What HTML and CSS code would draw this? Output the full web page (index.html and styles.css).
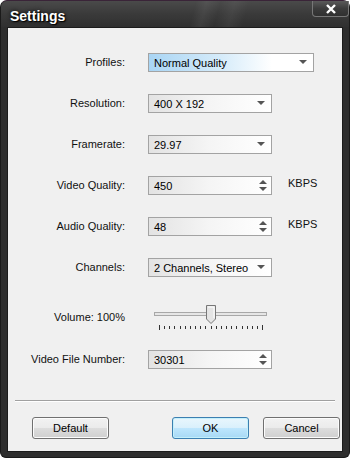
FILE: index.html
```html
<!DOCTYPE html>
<html lang="en">
<head>
    <meta charset="UTF-8">
    <title>Settings</title>
    <link rel="stylesheet" href="styles.css">
</head>
<body>
    <div class="window">
        <div class="titlebar">
            <div class="title">Settings</div>
            <div class="close">
                <svg width="12" height="10" viewBox="0 0 12 10"><path d="M2 1 L10 9 M10 1 L2 9" stroke="#fff" stroke-width="2.4"/></svg>
            </div>
        </div>
        <div class="client">
            <div class="form">
                <div class="row">
                    <label>Profiles:</label>
                    <div class="combo combo-wide selected"><span>Normal Quality</span><i class="arrow"></i></div>
                </div>
                <div class="row">
                    <label>Resolution:</label>
                    <div class="combo"><span>400 X 192</span><i class="arrow"></i></div>
                </div>
                <div class="row">
                    <label>Framerate:</label>
                    <div class="combo"><span>29.97</span><i class="arrow"></i></div>
                </div>
                <div class="row">
                    <label>Video Quality:</label>
                    <div class="combo spin"><span>450</span><i class="spinner"><b class="up"></b><b class="down"></b></i></div>
                    <div class="unit">KBPS</div>
                </div>
                <div class="row">
                    <label>Audio Quality:</label>
                    <div class="combo spin"><span>48</span><i class="spinner"><b class="up"></b><b class="down"></b></i></div>
                    <div class="unit">KBPS</div>
                </div>
                <div class="row">
                    <label>Channels:</label>
                    <div class="combo"><span>2 Channels, Stereo</span><i class="arrow"></i></div>
                </div>
                <div class="row row-volume">
                    <label>Volume: 100%</label>
                    <svg class="slider" width="116" height="34" viewBox="0 0 116 34">
                        <rect x="0.5" y="14.5" width="112" height="3" fill="#e6e6e6" stroke="#a8a8a8"/>
                        <g stroke="#333" stroke-width="1">
                            <line x1="5.5" y1="27" x2="5.5" y2="32"/>
                            <line x1="10.5" y1="28" x2="10.5" y2="31"/>
                            <line x1="15.5" y1="28" x2="15.5" y2="31"/>
                            <line x1="20.5" y1="28" x2="20.5" y2="31"/>
                            <line x1="26.5" y1="28" x2="26.5" y2="31"/>
                            <line x1="31.5" y1="28" x2="31.5" y2="31"/>
                            <line x1="36.5" y1="28" x2="36.5" y2="31"/>
                            <line x1="41.5" y1="28" x2="41.5" y2="31"/>
                            <line x1="46.5" y1="28" x2="46.5" y2="31"/>
                            <line x1="51.5" y1="28" x2="51.5" y2="31"/>
                            <line x1="57.5" y1="28" x2="57.5" y2="31"/>
                            <line x1="62.5" y1="28" x2="62.5" y2="31"/>
                            <line x1="67.5" y1="28" x2="67.5" y2="31"/>
                            <line x1="72.5" y1="28" x2="72.5" y2="31"/>
                            <line x1="77.5" y1="28" x2="77.5" y2="31"/>
                            <line x1="82.5" y1="28" x2="82.5" y2="31"/>
                            <line x1="88.5" y1="28" x2="88.5" y2="31"/>
                            <line x1="93.5" y1="28" x2="93.5" y2="31"/>
                            <line x1="98.5" y1="28" x2="98.5" y2="31"/>
                            <line x1="103.5" y1="28" x2="103.5" y2="31"/>
                            <line x1="108.5" y1="27" x2="108.5" y2="32"/>
                        </g>
                        <path d="M52.5 7.5 H61.5 V21 L57 25.5 L52.5 21 Z" fill="#e4e4e4" stroke="#777"/>
                        <path d="M54 9 H60 V20" fill="none" stroke="#fff"/>
                    </svg>
                </div>
                <div class="row">
                    <label>Video File Number:</label>
                    <div class="combo spin"><span>30301</span><i class="spinner"><b class="up"></b><b class="down"></b></i></div>
                </div>
            </div>
            <div class="separator"></div>
            <div class="buttons">
                <button class="btn">Default</button>
                <div class="right-buttons">
                    <button class="btn btn-default">OK</button>
                    <button class="btn">Cancel</button>
                </div>
            </div>
        </div>
    </div>
</body>
</html>
```
FILE: styles.css
```css
body {
    margin: 0;
    padding: 0;
    background: #fff;
    font-family: "Liberation Sans", Arial, sans-serif;
    font-size: 11px;
    color: #000;
}
.window {
    width: 350px;
    height: 458px;
    box-sizing: border-box;
    background: #2e2e2e;
    border: 1px solid #1a1a1a;
    border-top-color: #3a2438;
    border-radius: 7px 7px 6px 6px;
    padding: 0 6px 5px 6px;
    display: flex;
    flex-direction: column;
}
.titlebar {
    height: 26px;
    display: flex;
    justify-content: space-between;
    margin: 0 -6px;
    padding: 0 6px;
    background:
        linear-gradient(105deg, transparent 55%, rgba(255,255,255,0.06) 58%, transparent 62%, rgba(255,255,255,0.05) 66%, transparent 70%),
        linear-gradient(#4a4a4a, #3a3a3a 50%, #303030);
    border-radius: 6px 6px 0 0;
}
.title {
    color: #fff;
    font-weight: bold;
    font-size: 14px;
    padding: 7px 0 0 3px;
    text-shadow: 0 0 4px #000, 1px 1px 1px #000;
}
.close {
    width: 37px;
    height: 16px;
    margin-right: -6px;
    box-sizing: border-box;
    border: 1px solid #777;
    border-top: none;
    border-radius: 0 0 4px 4px;
    background: linear-gradient(#5a5a5a, #3c3c3c 50%, #303030);
    display: flex;
    align-items: center;
    justify-content: center;
}
.client {
    flex: 1;
    background: #f0f0f0;
    border: 1px solid #1c1c1c;
    display: flex;
    flex-direction: column;
}
.form {
    padding-top: 24px;
}
.row {
    height: 20px;
    margin-bottom: 21px;
    display: flex;
    align-items: center;
}
.row label {
    width: 117px;
    text-align: right;
    margin-right: 23px;
    color: #111;
}
.combo {
    width: 124px;
    height: 19px;
    box-sizing: border-box;
    border: 1px solid #a3a3a3;
    background: linear-gradient(to right, #e3e3e3, #f5f5f5 50%, #ffffff);
    display: flex;
    align-items: center;
    justify-content: space-between;
    padding: 0 5px 0 5px;
}
.combo span {
    padding-top: 1px;
}
.combo-wide {
    width: 166px;
}
.selected {
    background: linear-gradient(to right, #a9d5f4, #d7ecfa 45%, #ffffff 75%);
}
.arrow {
    width: 0;
    height: 0;
    border-left: 4px solid transparent;
    border-right: 4px solid transparent;
    border-top: 4px solid #555;
    margin-right: 1px;
}
.spin {
    padding-right: 4px;
}
.spinner {
    display: flex;
    flex-direction: column;
    gap: 3px;
}
.spinner b {
    width: 0;
    height: 0;
    border-left: 4px solid transparent;
    border-right: 4px solid transparent;
}
.spinner .up {
    border-bottom: 4px solid #555;
}
.spinner .down {
    border-top: 4px solid #555;
}
.unit {
    margin-left: 16px;
    margin-top: -4px;
    color: #111;
}
.row-volume {
    height: 34px;
    margin-bottom: 17px;
    align-items: flex-start;
}
.row-volume label {
    padding-top: 13px;
}
.slider {
    margin-left: 6px;
}
.separator {
    margin: 10px 7px 0 7px;
    border-top: 1px solid #a0a0a0;
    border-bottom: 1px solid #fff;
}
.buttons {
    display: flex;
    justify-content: space-between;
    padding: 15px 2px 0 24px;
}
.right-buttons {
    display: flex;
    gap: 14px;
}
.btn {
    width: 77px;
    height: 22px;
    font-family: "Liberation Sans", Arial, sans-serif;
    font-size: 11px;
    color: #000;
    border: 1px solid #707070;
    border-radius: 3px;
    background: linear-gradient(#f2f2f2, #ebebeb 50%, #dddddd 51%, #cfcfcf);
    box-shadow: inset 0 0 0 1px #fcfcfc;
    padding: 0;
}
.btn-default {
    border-color: #3c7fb1;
    background: linear-gradient(#e9f6fd, #d9f0fc 50%, #bee6fd 51%, #a7d9f5);
    box-shadow: inset 0 0 0 1px #c4f0fb;
}
```
